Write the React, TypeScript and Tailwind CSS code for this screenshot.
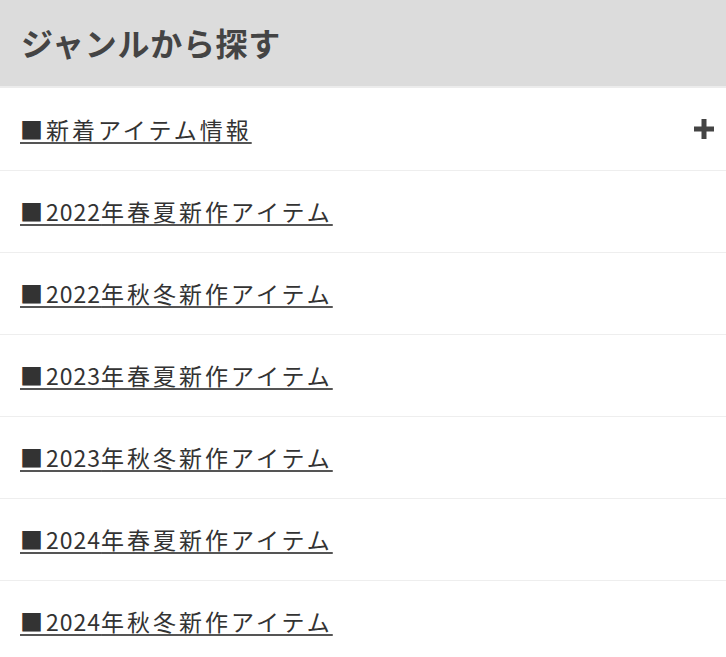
import React from "react";

const items: { year?: string; rest: string; plus?: boolean }[] = [
  { rest: "新着アイテム情報", plus: true },
  { year: "2022", rest: "年春夏新作アイテム" },
  { year: "2022", rest: "年秋冬新作アイテム" },
  { year: "2023", rest: "年春夏新作アイテム" },
  { year: "2023", rest: "年秋冬新作アイテム" },
  { year: "2024", rest: "年春夏新作アイテム" },
  { year: "2024", rest: "年秋冬新作アイテム" },
];

function Plus() {
  return (
    <svg width="22" height="22" viewBox="0 0 22 22" className="shrink-0">
      <rect x="8.5" y="1" width="5" height="20" fill="#444" />
      <rect x="1" y="8.5" width="20" height="5" fill="#444" />
    </svg>
  );
}

export default function App() {
  return (
    <div
      className="w-[726px] h-[657px] overflow-hidden bg-white"
      style={{ fontFamily: '"Noto Sans CJK JP", "Noto Sans", sans-serif' }}
    >
      <div className="h-[88px] bg-[#dcdcdc] flex items-center pl-[21px] pr-5 pb-[3px] border-b-2 border-[#ececec]">
        <h2 className="text-[32px] font-bold text-[#444] leading-none tracking-[0.7px]">
          ジャンルから探す
        </h2>
      </div>
      <ul>
        {items.map((it, i) => (
          <li
            key={i}
            className={`${i === 0 ? "h-[83px]" : "h-[82px]"} border-b border-[#eeeeee] flex items-center justify-between pl-5 pr-[11px]`}
          >
            <a
              href="#"
              className="text-[23px] text-[#333] leading-none tracking-[3px] underline decoration-[#555] decoration-[1.5px] underline-offset-[3px]"
            >
              ■
              {it.year && <span className="tracking-[1px]">{it.year}</span>}
              {it.rest}
            </a>
            {it.plus && <Plus />}
          </li>
        ))}
      </ul>
    </div>
  );
}
